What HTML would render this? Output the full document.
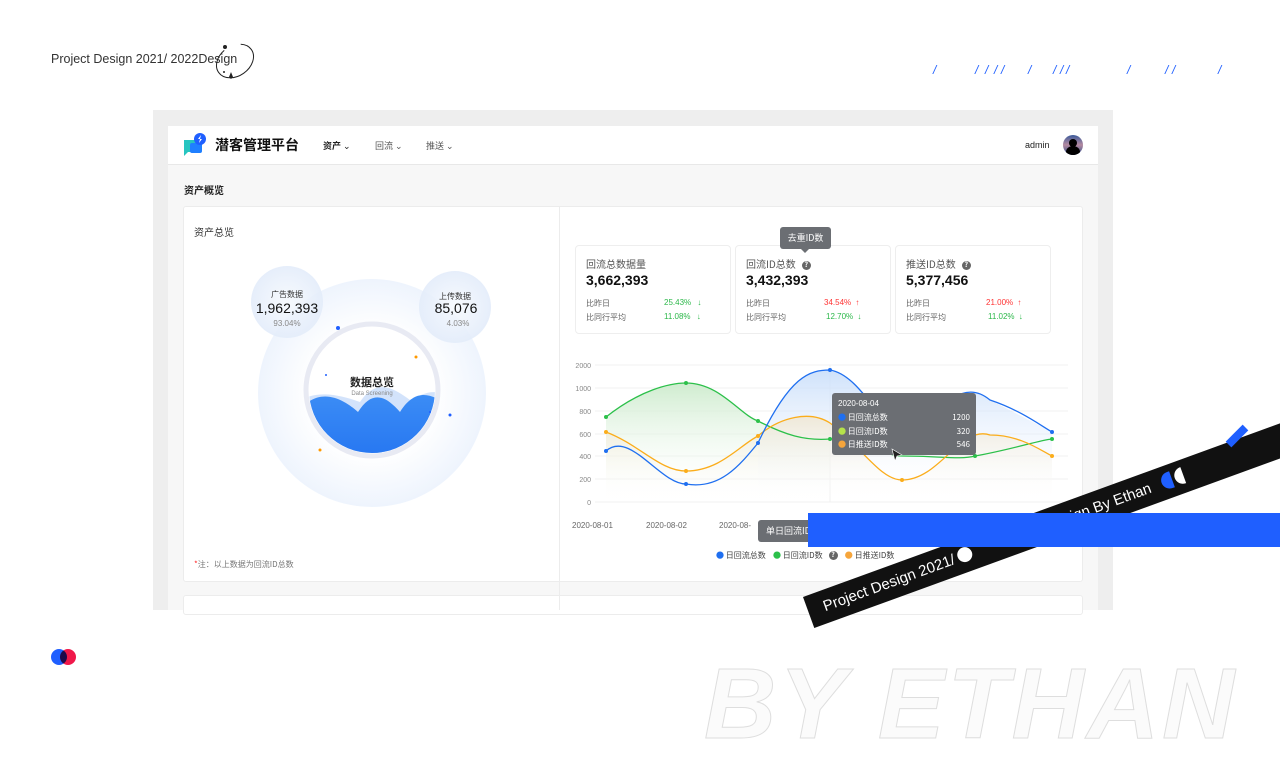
<!DOCTYPE html>
<html><head><meta charset="utf-8"><style>
*{margin:0;padding:0;box-sizing:border-box}
body{width:1280px;height:720px;overflow:hidden;background:#fff;position:relative;font-family:"Liberation Sans","Noto Sans CJK SC",sans-serif;color:#222}
.a{position:absolute}
.cj{font-family:"Noto Sans CJK SC","Liberation Sans",sans-serif}
.stat{position:absolute;top:245px;width:156px;height:89px;border:1px solid #eee;border-radius:4px;background:#fff}
.stat .t{position:absolute;left:10px;top:10px;font-size:10px;color:#555}
.stat .n{position:absolute;left:10px;top:26px;font-size:14px;font-weight:bold;color:#111}
.stat .r{position:absolute;left:10px;font-size:8px;color:#666}
.stat .v{position:absolute;font-size:8px}
.q{display:inline-block;width:9px;height:9px;border-radius:50%;background:#666;color:#fff;font-size:7px;text-align:center;line-height:9px;font-weight:bold;vertical-align:1px;margin-left:6px}
.sl{position:absolute;top:63px;font-size:12px;color:#1f5fff;font-style:italic}
</style></head><body>
<div class="a" style="left:51px;top:52px;font-size:12.5px;color:#333">Project Design 2021/ 2022Design</div>
<svg class="a" style="left:205px;top:38px" width="52" height="50"><ellipse cx="30" cy="23" rx="20" ry="15" transform="rotate(-35 30 23)" fill="none" stroke="#222" stroke-width="1" stroke-dasharray="80 18"/><circle cx="20" cy="9" r="2" fill="#222"/><path d="M24 39 l2 -5 l2 5 l-2 2z" fill="#222"/><circle cx="19" cy="34" r="1" fill="#222"/></svg>
<div class="sl" style="left:933px">/</div>
<div class="sl" style="left:975px">/</div><div class="sl" style="left:985px">/</div><div class="sl" style="left:994px">/</div><div class="sl" style="left:1001px">/</div>
<div class="sl" style="left:1028px">/</div>
<div class="sl" style="left:1053px">/</div><div class="sl" style="left:1060px">/</div><div class="sl" style="left:1066px">/</div>
<div class="sl" style="left:1127px">/</div>
<div class="sl" style="left:1165px">/</div><div class="sl" style="left:1172px">/</div>
<div class="sl" style="left:1218px">/</div>

<div class="a" style="left:153px;top:110px;width:960px;height:500px;background:#eee"></div>
<div class="a" style="left:168px;top:126px;width:930px;height:484px;background:#f7f7f7"></div>
<div class="a" style="left:168px;top:126px;width:930px;height:39px;background:#fff;border-bottom:1px solid #e8e8e8"></div>
<svg class="a" style="left:183px;top:133px" width="26" height="24"><path d="M1 7 h16 v12 h-12 l-4 4z" fill="#27c5c0"/><rect x="7" y="10" width="12" height="10" rx="2" fill="#1f7fff"/><circle cx="17" cy="6" r="6" fill="#1f5fff"/><path d="M18 2 l-3 4 h2 l-1 4 l3 -4 h-2z" fill="#fff"/></svg>
<div class="a cj" style="left:215px;top:135px;font-size:14px;font-weight:bold;color:#111">潜客管理平台</div>
<div class="a cj" style="left:323px;top:139px;font-size:9px;font-weight:bold;color:#222">资产 <span style="font-weight:normal">⌄</span></div>
<div class="a cj" style="left:375px;top:139px;font-size:9px;color:#555">回流 ⌄</div>
<div class="a cj" style="left:426px;top:139px;font-size:9px;color:#555">推送 ⌄</div>
<div class="a" style="left:1025px;top:140px;font-size:9px;color:#222">admin</div>
<div class="a" style="left:1063px;top:135px;width:20px;height:20px;border-radius:50%;background:linear-gradient(#3a5a9a,#b48aa0 50%,#2a4a8a);overflow:hidden"><div style="position:absolute;left:6px;top:4px;width:8px;height:8px;border-radius:50%;background:#000"></div><div style="position:absolute;left:3px;top:11px;width:14px;height:12px;border-radius:50%;background:#000"></div></div>
<div class="a cj" style="left:184px;top:182px;font-size:10px;font-weight:bold;color:#222">资产概览</div>

<div class="a" style="left:183px;top:206px;width:900px;height:376px;background:#fff;border:1px solid #ececec;border-radius:3px"></div>
<div class="a" style="left:183px;top:595px;width:900px;height:20px;background:#fff;border:1px solid #ececec;border-radius:3px"></div>
<div class="a" style="left:559px;top:207px;width:1px;height:403px;background:#ececec"></div>
<div class="a cj" style="left:194px;top:224px;font-size:10px;color:#333">资产总览</div>
<div class="a cj" style="left:194px;top:559px;font-size:8px;color:#777"><span style="color:#f33">*</span>注：以上数据为回流ID总数</div>

<svg class="a" style="left:240px;top:260px" width="270" height="260">
<defs><radialGradient id="bg" cx=".5" cy=".5" r=".5"><stop offset=".55" stop-color="#fff"/><stop offset="1" stop-color="#eef4fd"/></radialGradient>
<radialGradient id="sm" cx=".5" cy=".5" r=".5"><stop offset="0" stop-color="#f4f8fd" stop-opacity=".8"/><stop offset="1" stop-color="#e3ecfa" stop-opacity=".9"/></radialGradient>
<clipPath id="cl"><circle cx="132" cy="130" r="63"/></clipPath>
<linearGradient id="wv" x1="0" y1="0" x2="0" y2="1"><stop offset="0" stop-color="#3b8cf5"/><stop offset="1" stop-color="#1f6ff0"/></linearGradient></defs>
<circle cx="132" cy="133" r="114" fill="url(#bg)"/>
<circle cx="132" cy="130" r="66" fill="#fff" stroke="#e8eaf3" stroke-width="5"/>
<g clip-path="url(#cl)"><path d="M60 140 C80 130 100 135 120 142 C135 120 150 125 170 140 C180 135 190 130 200 133 V220 H60z" fill="#c8dcfa" opacity=".8"/>
<path d="M60 150 C80 125 105 140 118 152 C132 130 145 135 160 152 C175 128 190 135 200 140 V220 H60z" fill="url(#wv)"/></g>
<circle cx="47" cy="42" r="36" fill="url(#sm)"/><circle cx="215" cy="47" r="36" fill="url(#sm)"/>
<circle cx="98" cy="68" r="2" fill="#1f5fff"/><circle cx="176" cy="97" r="1.5" fill="#f90"/><circle cx="86" cy="115" r="1" fill="#1f5fff"/><circle cx="210" cy="155" r="1.5" fill="#1f5fff"/><circle cx="80" cy="190" r="1.5" fill="#f90"/><circle cx="190" cy="152" r="1" fill="#1f5fff"/>
</svg>
<div class="a cj" style="left:252px;top:289px;width:70px;text-align:center;font-size:8px;color:#333">广告数据</div>
<div class="a" style="left:252px;top:300px;width:70px;text-align:center;font-size:14px;color:#111">1,962,393</div>
<div class="a" style="left:252px;top:319px;width:70px;text-align:center;font-size:8px;color:#888">93.04%</div>
<div class="a cj" style="left:420px;top:291px;width:70px;text-align:center;font-size:8px;color:#333">上传数据</div>
<div class="a" style="left:420px;top:300px;width:72px;text-align:center;font-size:14px;color:#111">85,076</div>
<div class="a" style="left:420px;top:319px;width:76px;text-align:center;font-size:8px;color:#888">4.03%</div>
<div class="a cj" style="left:332px;top:374px;width:80px;text-align:center;font-size:11px;font-weight:bold;color:#222">数据总览</div>
<div class="a" style="left:332px;top:391px;width:80px;text-align:center;font-size:6px;color:#888">Data Screening</div>

<div class="stat" style="left:575px"><div class="t cj">回流总数据量</div><div class="n">3,662,393</div>
<div class="r cj" style="top:52px">比昨日</div><div class="v" style="left:88px;top:52px;color:#2cb84a">25.43% <span style="margin-left:4px">↓</span></div>
<div class="r cj" style="top:66px">比同行平均</div><div class="v" style="left:88px;top:66px;color:#2cb84a">11.08% <span style="margin-left:4px">↓</span></div></div>
<div class="stat" style="left:735px"><div class="t cj">回流ID总数<span class="q">?</span></div><div class="n">3,432,393</div>
<div class="r cj" style="top:52px">比昨日</div><div class="v" style="left:88px;top:52px;color:#f33">34.54% <span style="margin-left:2px">↑</span></div>
<div class="r cj" style="top:66px">比同行平均</div><div class="v" style="left:90px;top:66px;color:#2cb84a">12.70% <span style="margin-left:2px">↓</span></div></div>
<div class="stat" style="left:895px"><div class="t cj">推送ID总数<span class="q">?</span></div><div class="n">5,377,456</div>
<div class="r cj" style="top:52px">比昨日</div><div class="v" style="left:90px;top:52px;color:#f33">21.00% <span style="margin-left:2px">↑</span></div>
<div class="r cj" style="top:66px">比同行平均</div><div class="v" style="left:92px;top:66px;color:#2cb84a">11.02% <span style="margin-left:2px">↓</span></div></div>
<div class="a cj" style="left:780px;top:227px;width:51px;height:22px;background:#6b6e73;border-radius:3px;color:#fff;font-size:9px;text-align:center;line-height:22px">去重ID数</div>
<div class="a" style="left:801px;top:249px;border:4px solid transparent;border-top-color:#6b6e73"></div>

<svg class="a" style="left:560px;top:355px" width="520" height="200" font-family="Liberation Sans" font-size="7" fill="#888">
<defs><linearGradient id="gg" x1="0" y1="0" x2="0" y2="1"><stop offset="0" stop-color="#cfeccf"/><stop offset="1" stop-color="#fff" stop-opacity="0"/></linearGradient>
<linearGradient id="bb" x1="0" y1="0" x2="0" y2="1"><stop offset="0" stop-color="#c9defa"/><stop offset="1" stop-color="#fff" stop-opacity="0"/></linearGradient>
<linearGradient id="oo" x1="0" y1="0" x2="0" y2="1"><stop offset="0" stop-color="#f0e6cf"/><stop offset="1" stop-color="#fff" stop-opacity="0"/></linearGradient></defs>
<g stroke="#f0f0f0"><line x1="35" y1="10" x2="508" y2="10"/><line x1="35" y1="33" x2="508" y2="33"/><line x1="35" y1="56" x2="508" y2="56"/><line x1="35" y1="79" x2="508" y2="79"/><line x1="35" y1="101" x2="508" y2="101"/><line x1="35" y1="124" x2="508" y2="124"/><line x1="35" y1="147" x2="508" y2="147"/><line x1="270" y1="10" x2="270" y2="147"/></g>
<g text-anchor="end"><text x="31" y="13">2000</text><text x="31" y="36">1000</text><text x="31" y="59">800</text><text x="31" y="82">600</text><text x="31" y="104">400</text><text x="31" y="127">200</text><text x="31" y="150">0</text></g>
<path d="M46 62 C80 35 110 28 126 28 C160 28 180 60 198 66 C225 80 245 86 270 84 L270 147 H46z" fill="url(#gg)"/>
<path d="M198 88 C230 20 250 15 270 15 C300 20 320 70 342 80 C380 60 400 20 430 45 L492 77 V147 H198z" fill="url(#bb)" opacity=".9"/>
<path d="M46 77 C80 90 100 116 126 116 C160 116 180 90 198 81 C220 62 250 55 270 68 C300 90 320 125 342 125 C380 125 400 70 430 80 C460 80 480 95 492 101 V147 H46z" fill="url(#oo)" opacity=".8"/>
<g fill="none" stroke-width="1.3">
<path d="M46 62 C80 35 110 28 126 28 C160 28 180 60 198 66 C225 80 245 86 270 84 C300 80 320 101 342 101 C380 101 400 105 415 101 C450 95 480 85 492 84" stroke="#2cc04a"/>
<path d="M46 77 C80 90 100 116 126 116 C160 116 180 90 198 81 C220 62 250 55 270 68 C300 90 320 125 342 125 C380 125 400 70 430 80 C460 80 480 95 492 101" stroke="#fbad1b"/>
<path d="M46 96 C70 75 100 129 126 129 C160 135 180 110 198 88 C230 20 250 15 270 15 C300 20 320 70 342 80 C380 60 400 20 430 45 C460 55 480 70 492 77" stroke="#1f6ff0"/></g>
<g><circle cx="46" cy="96" r="2" fill="#1f6ff0"/><circle cx="126" cy="129" r="2" fill="#1f6ff0"/><circle cx="198" cy="88" r="2" fill="#1f6ff0"/><circle cx="270" cy="15" r="2" fill="#1f6ff0"/><circle cx="492" cy="77" r="2" fill="#1f6ff0"/>
<circle cx="46" cy="62" r="2" fill="#2cc04a"/><circle cx="126" cy="28" r="2" fill="#2cc04a"/><circle cx="198" cy="66" r="2" fill="#2cc04a"/><circle cx="270" cy="84" r="2" fill="#2cc04a"/><circle cx="415" cy="101" r="2" fill="#2cc04a"/><circle cx="492" cy="84" r="2" fill="#2cc04a"/>
<circle cx="46" cy="77" r="2" fill="#fbad1b"/><circle cx="126" cy="116" r="2" fill="#fbad1b"/><circle cx="198" cy="81" r="2" fill="#fbad1b"/><circle cx="342" cy="125" r="2" fill="#fbad1b"/><circle cx="492" cy="101" r="2" fill="#fbad1b"/></g>
<g font-size="8" fill="#666"><text x="12" y="173">2020-08-01</text><text x="86" y="173">2020-08-02</text><text x="159" y="173">2020-08-</text></g>
</svg>
<div class="a" style="left:832px;top:393px;width:144px;height:62px;background:#6b6e73;border-radius:3px;color:#fff;font-size:8px" >
<div style="position:absolute;left:6px;top:6px">2020-08-04</div>
<div class="cj" style="position:absolute;left:6px;top:19px;width:132px"><span style="color:#1f6ff0">●</span> 日回流总数<span style="float:right">1200</span></div>
<div class="cj" style="position:absolute;left:6px;top:33px;width:132px"><span style="color:#b5e24a">●</span> 日回流ID数<span style="float:right">320</span></div>
<div class="cj" style="position:absolute;left:6px;top:46px;width:132px"><span style="color:#f6a53b">●</span> 日推送ID数<span style="float:right">546</span></div></div>
<svg class="a" style="left:890px;top:448px" width="14" height="14"><path d="M2 1 L12 7 L7 8 L5 13z" fill="#222" stroke="#fff" stroke-width=".6"/></svg>
<div class="a cj" style="left:758px;top:520px;width:60px;height:22px;background:#6b6e73;border-radius:3px;color:#fff;font-size:9px;line-height:22px;padding-left:8px">单日回流ID</div>
<div class="a cj" style="left:716px;top:550px;font-size:8px;color:#444;white-space:nowrap"><span style="color:#1f6ff0">●</span> 日回流总数 &nbsp;&nbsp;&nbsp;<span style="color:#2cc04a">●</span> 日回流ID数<span class="q">?</span> &nbsp;&nbsp;&nbsp;<span style="color:#f6a53b">●</span> 日推送ID数</div>

<div class="a" style="left:803px;top:597px;width:540px;height:33px;background:#111;transform:rotate(-20deg);transform-origin:0 0;color:#fff;font-size:15px;line-height:33px;padding-left:16px;white-space:nowrap">Project Design 2021/ <span style="display:inline-block;width:15px;height:15px;border-radius:50%;background:#fff;vertical-align:-2px"></span><span style="display:inline-block;width:78px"></span>Design By Ethan <span style="display:inline-block;width:11px;height:17px;border-radius:9px 0 0 9px;background:#1f5fff;vertical-align:-3px;margin-left:8px"></span><span style="display:inline-block;width:9px;height:17px;border-radius:9px 0 0 9px;background:#fff;vertical-align:-3px;margin-left:3px"></span></div>
<div class="a" style="left:1225px;top:432px;width:24px;height:8px;background:#1f5fff;transform:rotate(-45deg)"></div>
<div class="a" style="left:808px;top:513px;width:472px;height:34px;background:#1f5fff"></div>

<div class="a" style="left:51px;top:649px;width:16px;height:16px;border-radius:50%;background:#1f5fff"></div>
<div class="a" style="left:60px;top:649px;width:16px;height:16px;border-radius:50%;background:#f0184a;mix-blend-mode:multiply"></div>
<div class="a" style="left:704px;top:644px;font-size:100px;font-weight:bold;font-style:italic;color:#fbfbfb;-webkit-text-stroke:1px #dedede;letter-spacing:3px;white-space:nowrap;line-height:120px">BY ETHAN</div>
</body></html>
